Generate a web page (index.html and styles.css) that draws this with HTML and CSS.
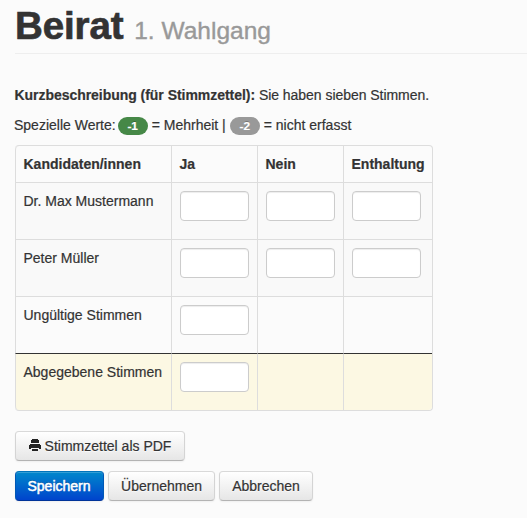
FILE: index.html
```html
<!DOCTYPE html>
<html lang="de">
<head>
<meta charset="utf-8">
<title>Beirat – 1. Wahlgang</title>
<link rel="stylesheet" href="styles.css">
</head>
<body>
<h1 class="page-title"><span class="name">Beirat</span> <small>1. Wahlgang</small></h1>
<p class="summary"><b>Kurzbeschreibung (für Stimmzettel):</b> <span>Sie haben sieben Stimmen.</span></p>
<p class="hint"><span>Spezielle Werte:</span> <span class="badge success">-1</span> <span>= Mehrheit |</span> <span class="badge">-2</span> <span>= nicht erfasst</span></p>
<table class="votes">
<colgroup><col class="who"><col class="vote"><col class="vote"><col class="abstain"></colgroup>
<thead>
<tr><th>Kandidaten/innen</th><th>Ja</th><th>Nein</th><th>Enthaltung</th></tr>
</thead>
<tbody>
<tr class="odd"><td>Dr. Max Mustermann</td><td><input type="text"></td><td><input type="text"></td><td><input type="text"></td></tr>
<tr class="odd"><td>Peter Müller</td><td><input type="text"></td><td><input type="text"></td><td><input type="text"></td></tr>
<tr><td>Ungültige Stimmen</td><td><input type="text"></td><td></td><td></td></tr>
<tr class="total"><td>Abgegebene Stimmen</td><td><input type="text"></td><td></td><td></td></tr>
</tbody>
</table>
<div class="actions">
<a class="btn pdf"><svg class="icon" width="12" height="12" viewBox="0 0 12 12" shape-rendering="crispEdges"><path fill="#222" d="M3 0h6v1h1v3H2V1h1zM1 5h10v1h1v4h-2V9H2v1H0V6h1zM3 10h6v2H3z"/></svg><span>Stimmzettel als PDF</span></a>
</div>
<div class="actions">
<button class="btn primary">Speichern</button>
<button class="btn apply">Übernehmen</button>
<button class="btn cancel">Abbrechen</button>
</div>
</body>
</html>
```
FILE: styles.css
```css
html {
  overflow: hidden;
}

body {
  margin: 0;
  padding: 6px 0 0 15px;
  background: #fbfbfb;
  color: #333;
  font: 14px/20px "Liberation Sans", Arial, sans-serif;
  -webkit-text-stroke: .2px;
}

.page-title {
  margin: 0 0 31px;
  height: 47px;
  border-bottom: 1px solid #eee;
  font-size: 38.5px;
  line-height: 40px;
  white-space: nowrap;
}

.page-title .name {
  letter-spacing: -.1px;
  -webkit-text-stroke: .7px;
}

.page-title small {
  color: #999;
  font-size: 24.5px;
  font-weight: normal;
  -webkit-text-stroke: .4px;
}

p {
  margin: 0 0 10px;
  white-space: nowrap;
}

.summary {
  margin-left: -.5px;
  letter-spacing: -.04px;
}

.hint {
  display: flex;
  gap: 4px;
  margin-left: -1px;
  margin-bottom: 10px;
}

.badge {
  box-sizing: border-box;
  width: 30px;
  height: 18px;
  margin-top: 2px;
  border-radius: 9px;
  background: #999;
  color: #fff;
  font-size: 11.8px;
  font-weight: bold;
  line-height: 18px;
  text-align: center;
  text-shadow: 0 -1px 0 rgba(0, 0, 0, .25);
}

.badge.success {
  margin-left: -2px;
  background: #468847;
}

.votes {
  width: 418px;
  margin-bottom: 20px;
  border: 1px solid #ddd;
  border-left: 0;
  border-radius: 4px;
  border-collapse: separate;
  border-spacing: 0;
  table-layout: fixed;
}

.who { width: 156px; }
.vote { width: 86px; }
.abstain { width: 89px; }

.votes th,
.votes td {
  box-sizing: border-box;
  padding: 8px;
  border-left: 1px solid #ddd;
  text-align: left;
  vertical-align: top;
  white-space: nowrap;
}

.votes th {
  padding-left: 7.5px;
}

.votes td:first-child {
  padding-left: 7.5px;
}

.votes td {
  height: 57px;
  border-top: 1px solid #ddd;
}

.votes th:first-child { border-top-left-radius: 4px; }
.votes .odd td { background: #f9f9f9; }

.votes .total td {
  border-top-color: #333;
  background: #fcf8e3;
}

.votes .total td:first-child { border-bottom-left-radius: 4px; }
.votes .total td:last-child { border-bottom-right-radius: 4px; }

.votes input {
  display: block;
  box-sizing: border-box;
  width: 69px;
  height: 30px;
  margin: 0 0 10px;
  padding: 4px 6px;
  border: 1px solid #ccc;
  border-radius: 4px;
  background: #fff;
  box-shadow: inset 0 1px 1px rgba(0, 0, 0, .075);
}

.actions {
  display: flex;
  gap: 4px;
  margin-bottom: 10px;
}

.btn {
  display: flex;
  box-sizing: border-box;
  align-items: center;
  justify-content: center;
  height: 30px;
  padding: 0;
  border: 1px solid #ccc;
  border-color: #d9d9d9 #d4d4d4 #b3b3b3;
  border-radius: 4px;
  background: linear-gradient(#fff, #e6e6e6);
  box-shadow: inset 0 1px 0 rgba(255, 255, 255, .2), 0 1px 2px rgba(0, 0, 0, .05);
  color: #333;
  font: inherit;
  text-shadow: 0 1px 1px rgba(255, 255, 255, .75);
  white-space: nowrap;
}

.icon {
  margin-top: -2px;
}

.btn.primary {
  width: 89px;
  padding-right: 1px;
  border-color: #0074bb #0058b5 #003399;
  background: linear-gradient(#08c, #04c);
  color: #fff;
  text-shadow: 0 -1px 0 rgba(0, 0, 0, .25);
  -webkit-text-stroke: .5px;
}

.pdf { width: 170px; gap: 4px; }
.apply { width: 107px; }
.cancel { width: 94px; }
```
